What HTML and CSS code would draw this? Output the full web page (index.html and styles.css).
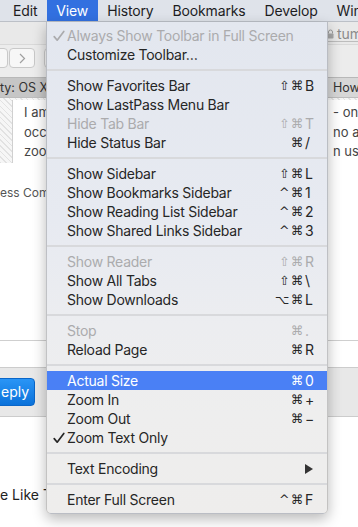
FILE: index.html
```html
<!DOCTYPE html>
<html>
<head>
<meta charset="utf-8">
<link rel="stylesheet" href="styles.css">
</head>
<body>
<div class="menubar">
  <span class="mb-item first">Edit</span>
  <span class="mb-item active">View</span>
  <span class="mb-item">History</span>
  <span class="mb-item">Bookmarks</span>
  <span class="mb-item">Develop</span>
  <span class="mb-item last">Wind</span>
</div>

<div class="page">
  <div class="toolbar">
    <div class="tb-top">
      <div class="addr">
        <svg class="lock" width="7" height="10" viewBox="0 0 7 10"><path d="M1.5 4.5V3a2 2 0 0 1 4 0v1.5" fill="none" stroke="#9a9a9a" stroke-width="1"/><rect x="0.5" y="4.5" width="6" height="5" rx="0.8" fill="#a8a8a8"/></svg>
        <span class="addr-text">tum</span>
      </div>
    </div>
    <div class="tb-nav">
      <span class="navbtn back"></span>
      <span class="navbtn fwd"><svg width="7" height="11" viewBox="0 0 7 11"><path d="M1 1l4.5 4.5L1 10" fill="none" stroke="#a0a0a0" stroke-width="1.2"/></svg></span>
      <span class="navbtn third"></span>
    </div>
  </div>
  <div class="tabbar">
    <div class="tab tab-left">ty: OS X</div>
    <div class="tab tab-right">How</div>
  </div>
  <div class="content">
    <div class="quote">
      <span class="q-left">I am</span><span class="q-right">- on a</span>
      <span class="q-left">occa</span><span class="q-right">no ap</span>
      <span class="q-left">zoom</span><span class="q-right">n usin</span>
    </div>
  </div>
  <div class="community">ess Comm</div>
  <div class="rule"></div>
  <div class="replybar">
    <span class="reply-btn">eply</span>
  </div>
  <div class="like">e Like T</div>
</div>

<div class="menu">
  <div class="row disabled"><span class="chk"><svg width="12" height="12" viewBox="0 0 12 12"><path d="M1.2 6.6L4.2 10.2L10.8 1.4" fill="none" stroke="currentColor" stroke-width="1.7" stroke-linecap="round" stroke-linejoin="round"/></svg></span><span class="label">Always Show Toolbar in Full Screen</span></div>
  <div class="row"><span class="chk"></span><span class="label">Customize Toolbar…</span></div>
  <div class="sep"></div>
  <div class="row"><span class="chk"></span><span class="label">Show Favorites Bar</span><span class="sc"><span class="mods">⇧⌘</span><span class="key">B</span></span></div>
  <div class="row"><span class="chk"></span><span class="label">Show LastPass Menu Bar</span></div>
  <div class="row disabled"><span class="chk"></span><span class="label">Hide Tab Bar</span><span class="sc"><span class="mods">⇧⌘</span><span class="key">T</span></span></div>
  <div class="row"><span class="chk"></span><span class="label">Hide Status Bar</span><span class="sc"><span class="mods">⌘</span><span class="key">/</span></span></div>
  <div class="sep"></div>
  <div class="row"><span class="chk"></span><span class="label">Show Sidebar</span><span class="sc"><span class="mods">⇧⌘</span><span class="key">L</span></span></div>
  <div class="row"><span class="chk"></span><span class="label">Show Bookmarks Sidebar</span><span class="sc"><span class="mods">^⌘</span><span class="key">1</span></span></div>
  <div class="row"><span class="chk"></span><span class="label">Show Reading List Sidebar</span><span class="sc"><span class="mods">^⌘</span><span class="key">2</span></span></div>
  <div class="row"><span class="chk"></span><span class="label">Show Shared Links Sidebar</span><span class="sc"><span class="mods">^⌘</span><span class="key">3</span></span></div>
  <div class="sep"></div>
  <div class="row disabled"><span class="chk"></span><span class="label">Show Reader</span><span class="sc"><span class="mods">⇧⌘</span><span class="key">R</span></span></div>
  <div class="row"><span class="chk"></span><span class="label">Show All Tabs</span><span class="sc"><span class="mods">⇧⌘</span><span class="key">\</span></span></div>
  <div class="row"><span class="chk"></span><span class="label">Show Downloads</span><span class="sc"><span class="mods">⌥⌘</span><span class="key">L</span></span></div>
  <div class="sep"></div>
  <div class="row disabled"><span class="chk"></span><span class="label">Stop</span><span class="sc"><span class="mods">⌘</span><span class="key">.</span></span></div>
  <div class="row"><span class="chk"></span><span class="label">Reload Page</span><span class="sc"><span class="mods">⌘</span><span class="key">R</span></span></div>
  <div class="sep"></div>
  <div class="row selected"><span class="chk"></span><span class="label">Actual Size</span><span class="sc"><span class="mods">⌘</span><span class="key">0</span></span></div>
  <div class="row"><span class="chk"></span><span class="label">Zoom In</span><span class="sc"><span class="mods">⌘</span><span class="key">+</span></span></div>
  <div class="row"><span class="chk"></span><span class="label">Zoom Out</span><span class="sc"><span class="mods">⌘</span><span class="key">−</span></span></div>
  <div class="row"><span class="chk"><svg width="12" height="12" viewBox="0 0 12 12"><path d="M1.2 6.6L4.2 10.2L10.8 1.4" fill="none" stroke="currentColor" stroke-width="1.7" stroke-linecap="round" stroke-linejoin="round"/></svg></span><span class="label">Zoom Text Only</span></div>
  <div class="sep"></div>
  <div class="row"><span class="chk"></span><span class="label">Text Encoding</span><span class="sc"><span class="key"><svg width="8" height="10" viewBox="0 0 8 10"><path d="M0 0L8 5L0 10Z" fill="#333"/></svg></span></span></div>
  <div class="sep"></div>
  <div class="row"><span class="chk"></span><span class="label">Enter Full Screen</span><span class="sc"><span class="mods">^⌘</span><span class="key">F</span></span></div>
</div>
</body>
</html>
```

FILE: styles.css
```css
html, body {
  margin: 0;
  padding: 0;
}
body {
  width: 358px;
  height: 527px;
  overflow: hidden;
  position: relative;
  background: #ffffff;
  font-family: Inter, "DejaVu Sans", sans-serif;
  color: #222;
}

/* ---------- menu bar ---------- */
.menubar {
  height: 22px;
  box-sizing: border-box;
  background: #dfe3ea;
  border-bottom: 1px solid #bcc0c7;
  display: flex;
  font-size: 14px;
  line-height: 21px;
  letter-spacing: -0.15px;
  color: #1d1d1f;
  white-space: nowrap;
  overflow: hidden;
}
.mb-item {
  padding: 0 9.5px;
  flex: none;
}
.mb-item.first {
  margin-left: 3.5px;
}
.mb-item.last {
  padding-right: 0;
}
.mb-item.active {
  background: #3270e0;
  color: #ffffff;
}

/* ---------- page behind ---------- */
.toolbar {
  background: #e9e9e9;
}
.tb-top {
  height: 22px;
  border-bottom: 1px solid #d9d9d9;
  display: flex;
  justify-content: flex-end;
  align-items: center;
}
.addr {
  width: 31px;
  height: 15px;
  display: flex;
  align-items: center;
  gap: 3px;
  white-space: nowrap;
  border-bottom: 1px solid #bdbdbd;
  margin-top: 2px;
}
.lock {
  flex: none;
}
.addr-text {
  font-size: 14px;
  color: #8a8a8a;
  line-height: 15px;
}
.tb-nav {
  height: 32px;
  box-sizing: border-box;
  padding-top: 3px;
  display: flex;
  background: #ececec;
}
.navbtn {
  height: 20px;
  box-sizing: border-box;
  background: #f7f7f7;
  border: 1px solid #c9c9c9;
  border-radius: 4px;
  display: flex;
  align-items: center;
  justify-content: center;
}
.navbtn.back {
  width: 28px;
  margin-left: -20px;
}
.navbtn.fwd {
  width: 26px;
  margin-left: 1px;
}
.navbtn.third {
  width: 28px;
  margin-left: 9px;
}
.tabbar {
  height: 21px;
  box-sizing: border-box;
  border-top: 1px solid #b8b8b8;
  border-bottom: 1px solid #bdbdbd;
  background: #d7d7d7;
  display: flex;
  font-size: 12.5px;
  line-height: 19px;
  color: #333;
  white-space: nowrap;
}
.tab-left {
  width: 46px;
  background: #c6c6c6;
}
.tab-right {
  margin-left: auto;
  width: 25px;
  padding-left: 5px;
  border-left: 1px solid #bdbdbd;
}
.content {
  height: 65px;
  box-sizing: border-box;
  padding: 2px 0 0 12px;
  background-color: #f6f6f6;
  background-image: repeating-linear-gradient(45deg, #e2e2e2 0, #e2e2e2 1px, transparent 1px, transparent 4px);
}
.quote {
  height: 63px;
  box-sizing: border-box;
  background: #ffffff;
  border-left: 1px solid #d0d0d0;
  padding-top: 4px;
  display: grid;
  grid-template-columns: 320px 26px;
  font-size: 13px;
  line-height: 17px;
  color: #444;
  white-space: nowrap;
}
.q-left {
  padding-left: 11px;
}
.community {
  margin-top: 21px;
  font-size: 12px;
  line-height: 17px;
  color: #555;
  white-space: nowrap;
}
.rule {
  margin-top: 139px;
  height: 1px;
  background: #cfcfcf;
}
.replybar {
  margin-top: 26px;
  height: 50px;
  box-sizing: border-box;
  background: #e8e8e8;
  border-top: 1px solid #cccccc;
  border-bottom: 1px solid #cccccc;
  padding-top: 10px;
  display: flex;
}
.reply-btn {
  height: 28px;
  box-sizing: border-box;
  width: 45px;
  margin-left: -10px;
  padding-left: 10px;
  border-radius: 4px;
  background: linear-gradient(#2a95f6, #0b72da);
  border: 1px solid #0a66c8;
  color: #ffffff;
  font-size: 14px;
  line-height: 26px;
}
.like {
  margin-top: 69px;
  font-size: 14px;
  line-height: 18px;
  color: #222;
  white-space: nowrap;
}

/* ---------- dropdown menu ---------- */
.menu {
  position: absolute;
  left: 46px;
  top: 22px;
  width: 282px;
  box-sizing: border-box;
  padding: 4px 0;
  background: linear-gradient(#e3e7ef 0%, #e7eaf1 40%, #ecedf0 62%, #eeeeee 80%, #eeedec 100%);
  border: 1px solid rgba(0, 0, 0, 0.18);
  border-top: none;
  border-radius: 0 0 5px 5px;
  box-shadow: 0 5px 14px rgba(0, 0, 0, 0.28);
  font-size: 14px;
  color: #262626;
  white-space: nowrap;
}
.row {
  height: 19px;
  line-height: 19px;
  display: flex;
  align-items: center;
  padding-right: 11px;
}
.row.disabled {
  color: #ababad;
}
.row.selected {
  background: #4a80f5;
  color: #ffffff;
}
.chk {
  width: 20px;
  flex: none;
  display: flex;
  align-items: center;
  padding-left: 6px;
  box-sizing: border-box;
}
.label {
  flex: 1;
  letter-spacing: -0.25px;
}
.sc {
  display: flex;
  align-items: center;
}
.mods {
  font-family: "DejaVu Sans", sans-serif;
  font-size: 12.5px;
  letter-spacing: 1.5px;
  text-align: right;
}
.key {
  width: 11px;
  margin-left: 0;
  display: flex;
  align-items: center;
}
.sep {
  height: 2px;
  margin: 5px 0;
  background: #d8d9dc;
}
```
